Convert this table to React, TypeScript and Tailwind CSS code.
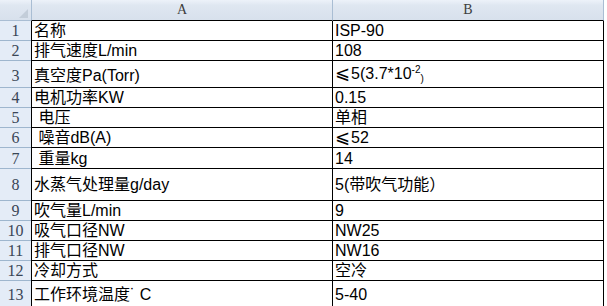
import React from "react";

type Row = { n: number; h: string; a: React.ReactNode; b: React.ReactNode };

const LE = (
  <span className="mr-[1px] font-['DejaVu_Sans',sans-serif] text-[18px] leading-[18px]">⩽</span>
);

const rows: Row[] = [
  { n: 1, h: "h-[20px]", a: "名称", b: "ISP-90" },
  { n: 2, h: "h-[20px]", a: "排气速度L/min", b: "108" },
  {
    n: 3,
    h: "h-[27px] pb-[2px]",
    a: "真空度Pa(Torr)",
    b: (
      <>
        {LE}5(3.7*10<span className="relative top-[-6px] text-[10px]">-2</span>
        <span className="relative top-[3px] text-[10px]">)</span>
      </>
    ),
  },
  { n: 4, h: "h-[20px]", a: "电机功率KW", b: "0.15" },
  { n: 5, h: "h-[20px]", a: "\u00a0电压", b: "单相" },
  { n: 6, h: "h-[20px]", a: "\u00a0噪音dB(A)", b: <>{LE}52</> },
  { n: 7, h: "h-[21px]", a: "\u00a0重量kg", b: "14" },
  { n: 8, h: "h-[32px] pb-[6px]", a: "水蒸气处理量g/day", b: "5(带吹气功能）" },
  { n: 9, h: "h-[20px]", a: "吹气量L/min", b: "9" },
  { n: 10, h: "h-[20px]", a: "吸气口径NW", b: "NW25" },
  { n: 11, h: "h-[20px]", a: "排气口径NW", b: "NW16" },
  { n: 12, h: "h-[20px]", a: "冷却方式", b: "空冷" },
  { n: 13, h: "h-[30px] pb-[6px]", a: "工作环境温度˙ C", b: "5-40" },
];

export default function App() {
  return (
    <div className="h-[306px] w-[607px] overflow-hidden bg-white font-['Liberation_Sans','Noto_Sans_CJK_SC',sans-serif] text-black">
      {/* header */}
      <div className="flex h-[21px] bg-[linear-gradient(180deg,#edf2f9_0%,#dfe7f1_25%,#d7e0ec_100%)]">
        <div className="relative w-[31px] shrink-0 border-b border-[#a9bdd3]">
          <svg className="absolute left-0 top-0" width="31" height="20" viewBox="0 0 31 20">
            <polygon points="28,9 28,18 19,18" fill="#c3cdd9" />
          </svg>
        </div>
        <div className="flex w-[301px] shrink-0 items-center justify-center border-b border-l border-b-black border-l-[#a9bdd3] font-['Liberation_Serif',serif] text-[14px] leading-[18px] text-[#3d3d3d]">
          A
        </div>
        <div className="flex w-[272px] shrink-0 items-center justify-center border-b border-l border-r border-b-black border-l-[#a9bdd3] border-r-[#a9bdd3] font-['Liberation_Serif',serif] text-[14px] leading-[18px] text-[#3d3d3d]">
          B
        </div>
        <div className="flex-1 bg-white" />
      </div>
      {rows.map((r) => (
        <div key={r.n} className="flex">
          <div
            className={`flex w-[31px] shrink-0 items-end justify-center border-b border-[#9eb6ce] bg-[#e4ecf7] font-['Liberation_Serif',serif] text-[16px] leading-[18px] text-[#3a4656] ${r.h}`}
          >
            {r.n}
          </div>
          <div
            className={`flex w-[301px] shrink-0 items-end whitespace-pre border-b border-l border-black pl-[2px] text-[16px] leading-[18px] ${r.h}`}
          >
            <span>{r.a}</span>
          </div>
          <div
            className={`flex w-[272px] shrink-0 items-end whitespace-pre border-b border-l border-r border-black pl-[2px] text-[16px] leading-[18px] ${r.h}`}
          >
            <span>{r.b}</span>
          </div>
          <div className="flex-1 bg-white" />
        </div>
      ))}
    </div>
  );
}
